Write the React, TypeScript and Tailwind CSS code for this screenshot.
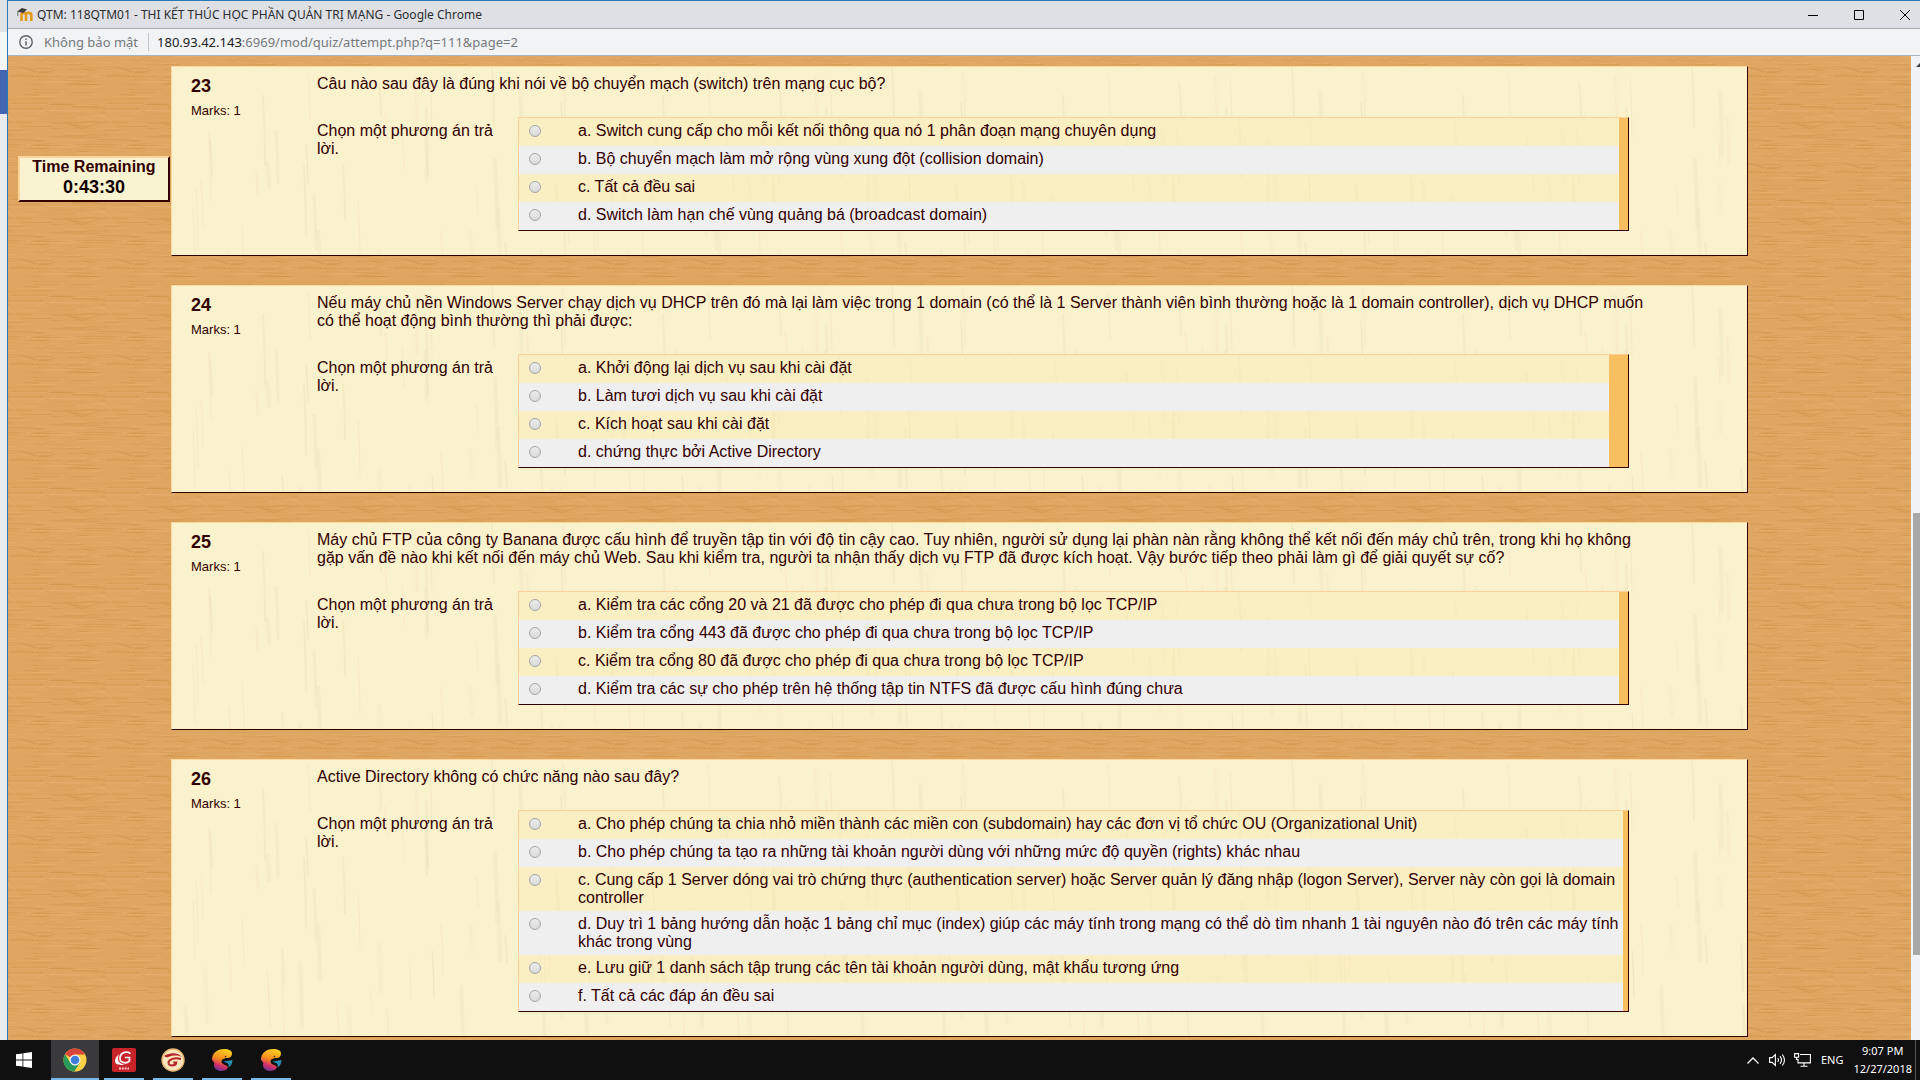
import React from "react";

type Question = {
  number: number;
  text: string;
  answers: string[];
  stripe: string;
};

const QUESTIONS: Question[] = [
  {
    number: 23,
    text: "Câu nào sau đây là đúng khi nói về bộ chuyển mạch (switch) trên mạng cục bộ?",
    answers: [
      "a. Switch cung cấp cho mỗi kết nối thông qua nó 1 phân đoạn mạng chuyên dụng",
      "b. Bộ chuyển mạch làm mở rộng vùng xung đột (collision domain)",
      "c. Tất cả đều sai",
      "d. Switch làm hạn chế vùng quảng bá (broadcast domain)",
    ],
    stripe: "w-[9px]",
  },
  {
    number: 24,
    text: "Nếu máy chủ nền Windows Server chạy dịch vụ DHCP trên đó mà lại làm việc trong 1 domain (có thể là 1 Server thành viên bình thường hoặc là 1 domain controller), dịch vụ DHCP muốn có thể hoạt động bình thường thì phải được:",
    answers: [
      "a. Khởi động lại dịch vụ sau khi cài đặt",
      "b. Làm tươi dịch vụ sau khi cài đặt",
      "c. Kích hoạt sau khi cài đặt",
      "d. chứng thực bởi Active Directory",
    ],
    stripe: "w-[19px]",
  },
  {
    number: 25,
    text: "Máy chủ FTP của công ty Banana được cấu hình để truyền tập tin với độ tin cậy cao. Tuy nhiên, người sử dụng lại phàn nàn rằng không thể kết nối đến máy chủ trên, trong khi họ không gặp vấn đề nào khi kết nối đến máy chủ Web. Sau khi kiểm tra, người ta nhận thấy dịch vụ FTP đã được kích hoạt. Vậy bước tiếp theo phải làm gì để giải quyết sự cố?",
    answers: [
      "a. Kiểm tra các cổng 20 và 21 đã được cho phép đi qua chưa trong bộ lọc TCP/IP",
      "b. Kiểm tra cổng 443 đã được cho phép đi qua chưa trong bộ lọc TCP/IP",
      "c. Kiểm tra cổng 80 đã được cho phép đi qua chưa trong bộ lọc TCP/IP",
      "d. Kiểm tra các sự cho phép trên hệ thống tập tin NTFS đã được cấu hình đúng chưa",
    ],
    stripe: "w-[9px]",
  },
  {
    number: 26,
    text: "Active Directory không có chức năng nào sau đây?",
    answers: [
      "a. Cho phép chúng ta chia nhỏ miền thành các miền con (subdomain) hay các đơn vị tổ chức OU (Organizational Unit)",
      "b. Cho phép chúng ta tạo ra những tài khoản người dùng với những mức độ quyền (rights) khác nhau",
      "c. Cung cấp 1 Server dóng vai trò chứng thực (authentication server) hoặc Server quản lý đăng nhập (logon Server), Server này còn gọi là domain controller",
      "d. Duy trì 1 bảng hướng dẫn hoặc 1 bảng chỉ mục (index) giúp các máy tính trong mạng có thể dò tìm nhanh 1 tài nguyên nào đó trên các máy tính khác trong vùng",
      "e. Lưu giữ 1 danh sách tập trung các tên tài khoản người dùng, mật khẩu tương ứng",
      "f. Tất cả các đáp án đều sai",
    ],
    stripe: "w-[5px]",
  },
];

/* Small deterministic generator so the grain is the same on every render. */
function generator(seed: number) {
  let s = seed;
  return () => {
    s = (s * 16807) % 2147483647;
    return s / 2147483647;
  };
}

function svgUrl(svg: string) {
  return `url("data:image/svg+xml,${encodeURIComponent(svg)}")`;
}

/* Horizontal oak grain, a 96px tile. */
function oakGrain() {
  const r = generator(77);
  let out = "";
  for (let i = 0; i < 170; i++) {
    const x = Math.floor(r() * 96);
    const y = Math.floor(r() * 96);
    const w = 8 + Math.floor(r() * 30);
    const c = r() > 0.45 ? "#cc8f40" : "#e9b473";
    const o = (0.12 + r() * 0.26).toFixed(2);
    out += `<rect x="${x}" y="${y}" width="${w}" height="1" fill="${c}" opacity="${o}"/>`;
    if (x + w > 96) out += `<rect x="${x - 96}" y="${y}" width="${w}" height="1" fill="${c}" opacity="${o}"/>`;
  }
  const knots =
    '<g fill="#c58a3c" opacity=".3">' +
    '<path d="M4 11q12-2 26 4l-4 2q-8-4-22-6zM30 15q14 1 26-3-12 5-26 5z"/>' +
    '<path d="M52 67q10-2 22 3l-6 2q-6-4-16-5zM70 71q12-1 22-4-10 5-22 6z"/>' +
    '<path d="M14 38h20l-6 2zM60 27h16l-5 2zM20 84h18l-6 2z"/></g>';
  return svgUrl(
    `<svg xmlns="http://www.w3.org/2000/svg" width="96" height="96"><rect width="96" height="96" fill="#dfa661"/>${out}${knots}</svg>`,
  );
}

/* Pale maple with faint vertical figure, used on the question cards. */
function mapleGrain() {
  const r = generator(4242);
  let out = "";
  for (let i = 0; i < 60; i++) {
    const x = Math.floor(r() * 396);
    const y = Math.floor(r() * 250);
    const h = 25 + Math.floor(r() * 50);
    const c = r() > 0.5 ? "#e8dcb0" : "#f8e0bc";
    const w = 1 + Math.floor(r() * 4);
    const o = (0.5 / w + 0.08).toFixed(2);
    out += `<path d="M${x} ${y}q2 ${Math.floor(h / 2)} 2 ${h}" stroke="${c}" stroke-width="${w}" opacity="${o}" fill="none"/>`;
  }
  return svgUrl(
    `<svg xmlns="http://www.w3.org/2000/svg" width="400" height="330"><rect width="400" height="330" fill="#f9f2cd"/>${out}</svg>`,
  );
}

const OAK = oakGrain();
const MAPLE = mapleGrain();

function MoodleIcon() {
  return (
    <svg viewBox="0 0 16 16" className="h-4 w-4" aria-hidden="true">
      <path d="M4.500 14V8c0-2.800 4.500-2.800 4.500 0v6M9 8c0-2.800 5.300-2.800 5.300 0v6" fill="none" stroke="#e59a1c" strokeWidth="2.600" />
      <path d="M0 4.500 5 1l5 1.500-3.600 3.400z" fill="#3d3d3d" />
      <path d="M1 4.500.8 9" stroke="#555" strokeWidth=".8" />
    </svg>
  );
}

function WindowsIcon() {
  return (
    <svg viewBox="0 0 16 16" className="h-4 w-4" fill="#fff" aria-hidden="true">
      <path d="M0 2.300 6.500 1.400V7.600H0zM7.300 1.300 16 0v7.600H7.300zM0 8.400h6.500v6.200L0 13.700zM7.300 8.400H16V16l-8.700-1.300z" />
    </svg>
  );
}

function ChromeIcon() {
  return (
    <svg viewBox="0 0 24 24" className="h-6 w-6" aria-hidden="true">
      <circle cx="12" cy="12" r="11.500" fill="#f9cf45" />
      <path d="M12 12 2.040 6.250A11.500 11.500 0 0 1 21.960 6.500H12z" fill="#d9453c" />
      <path d="M2.040 6.250A11.500 11.500 0 0 0 11.200 23.500L16.800 14.800 12 12 7.300 14.700z" fill="#279a5b" />
      <circle cx="12" cy="12" r="5.500" fill="#f2f4f5" />
      <circle cx="12" cy="12" r="4.300" fill="#3f7fdb" />
    </svg>
  );
}

function GCafeIcon() {
  return (
    <svg viewBox="0 0 24 24" className="h-6 w-6" aria-hidden="true">
      <rect width="24" height="24" rx="2" fill="#c9232a" />
      <path d="M18.500 5.600C15.500 2.800 9 4 8 9.500c-.8 5 6 7 9.500 3.300V9.500h-4.500" fill="none" stroke="#fff" strokeWidth="1.700" />
      <path d="M7.500 6C3 9 2 13.500 4 15.500c2.500 2 7 1.500 10 1-4 0-8-2-8-6 0-2 .5-3 1.500-4.500z" fill="#fff" />
      <path d="M7 20.500h10" stroke="#f3c3c3" strokeWidth="2" strokeDasharray="2 .8" />
    </svg>
  );
}

function GarenaIcon() {
  return (
    <svg viewBox="0 0 24 24" className="h-6 w-6" aria-hidden="true">
      <circle cx="12" cy="12" r="11.700" fill="#e6b56f" />
      <circle cx="12" cy="12" r="10.300" fill="#fae6bc" />
      <path d="M3 8c4-2.500 9-3.500 14-2l4.500 3c-5-1.700-9.500-2-13.500-.3C6 9.700 5 9.500 3 8z" fill="#b5262b" />
      <path d="M20 11c-5-1.500-9-.8-11.500 1.500-2.200 2.300-.8 5 2.500 5 2.500 0 4-1 4.300-3h-3" fill="none" stroke="#b5262b" strokeWidth="2" />
    </svg>
  );
}

function GamingIcon({ id }: { id: string }) {
  return (
    <svg viewBox="0 0 24 24" className="h-6 w-6" aria-hidden="true">
      <defs>
        <linearGradient id={id} x1=".7" y1="0" x2=".4" y2="1">
          <stop offset="0" stopColor="#fbd321" />
          <stop offset=".5" stopColor="#f58a1f" />
          <stop offset=".78" stopColor="#d52d6a" />
          <stop offset="1" stopColor="#6a3494" />
        </linearGradient>
      </defs>
      <path
        d="M2 12C2 5 7 1 14 1c5 0 8 1.500 8 4.500 0 3-2 4.500-4.500 4.500-2 0-3 .5-4.500 1-2 1-2 4 0 5 1.500 1 4 1.500 5 3-1 3-4 4-7 4-4 0-7-2.500-7-6 0-1 .2-1.500.5-2z"
        fill={`url(#${id})`}
      />
      <path d="M13.500 13.500 22.500 12c-.3 4-1.500 6-4 7.500.5-2 .2-3-.5-4z" fill="#2a8fb0" />
      <circle cx="15.500" cy="8.500" r=".8" fill="#40210f" />
    </svg>
  );
}

function TitleBar() {
  return (
    <header className="flex h-7 shrink-0 items-center border-b border-[#a9adb3] bg-[#dee0e5] pt-px pr-2.5 pl-[9px]">
      <MoodleIcon />
      <h1 className="ml-1 font-['Noto_Sans',sans-serif] text-xs leading-4 text-[#2c2d30]">
        QTM: 118QTM01 - THI KẾT THÚC HỌC PHẦN QUẢN TRỊ MẠNG - Google Chrome
      </h1>
      <div className="ml-auto flex items-center gap-9">
        <button type="button" aria-label="Minimize" className="h-2.5 w-2.5">
          <svg viewBox="0 0 10 10" className="h-2.5 w-2.5"><path d="M0 5.500h10" stroke="#000" /></svg>
        </button>
        <button type="button" aria-label="Maximize" className="h-2.5 w-2.5">
          <svg viewBox="0 0 10 10" className="h-2.5 w-2.5"><path d="M.5.5h9v9h-9z" stroke="#000" fill="none" /></svg>
        </button>
        <button type="button" aria-label="Close" className="h-2.5 w-2.5">
          <svg viewBox="0 0 10 10" className="h-2.5 w-2.5"><path d="M0 0l10 10M10 0 0 10" stroke="#000" /></svg>
        </button>
      </div>
    </header>
  );
}

function AddressBar() {
  return (
    <div className="flex h-[27px] shrink-0 items-center border-b border-[#a9b3bb] bg-[#f1f3f5] pl-[11px] font-['Noto_Sans',sans-serif] text-[13px] leading-5 text-[#77797d]">
      <svg viewBox="0 0 14 14" className="h-3.5 w-3.5" aria-hidden="true">
        <circle cx="7" cy="7" r="6.200" fill="none" stroke="#5f6368" strokeWidth="1.400" />
        <path d="M7 6.200v4.300M7 3.400v1.500" stroke="#5f6368" strokeWidth="1.500" />
      </svg>
      <span className="ml-[11px]">Không bảo mật</span>
      <span className="mr-2 ml-2.5 h-[18px] w-px bg-[#c3c5c9]" />
      <span>
        <span className="text-[#202124]">180.93.42.143</span>:6969/mod/quiz/attempt.php?q=111&amp;page=2
      </span>
    </div>
  );
}

function QuestionCard({ question }: { question: Question }) {
  const promptId = `prompt-${question.number}`;
  return (
    <article
      className="flex border border-t-[#ffd8a0] border-r-[#330000] border-b-[#330000] border-l-[#ffd8a0] pt-2 pr-[97px] pb-6 pl-[19px]"
      style={{ backgroundImage: MAPLE }}
    >
      <div className="w-[126px] shrink-0">
        <h2 className="text-lg leading-[22px] font-bold">{question.number}</h2>
        <p className="mt-1.5 text-[13px] leading-4">Marks: 1</p>
      </div>
      <div className="min-w-0 flex-1">
        <p className="text-base leading-[18px]">{question.text}</p>
        <div role="radiogroup" aria-labelledby={promptId} className="mt-6 mr-[21px] flex">
          <p id={promptId} className="w-[201px] shrink-0 pt-[5px] pr-5 text-base leading-[18px]">
            Chọn một phương án trả lời.
          </p>
          <div className="flex min-w-0 flex-1 border border-t-[#fdcf9c] border-r-[#330000] border-b-[#330000] border-l-[#fdcf9c] bg-[#f7bf60]">
            <div className="min-w-0 flex-1" style={{ backgroundImage: MAPLE }}>
              {question.answers.map((answer) => (
                <label
                  key={answer}
                  className="flex min-h-7 items-start bg-[#fbecb4]/40 pt-1 pb-1 text-base leading-[18px] even:bg-[#f0eff0]"
                >
                  <input
                    type="radio"
                    name={`q${question.number}`}
                    className="mt-[3px] ml-2.5 h-3 w-3 shrink-0 appearance-none rounded-full border border-[#a5a5a5] bg-linear-to-b from-[#ececec] to-[#dadada] checked:bg-[#555555]"
                  />
                  <span className="ml-[37px] min-w-0 flex-1">{answer}</span>
                </label>
              ))}
            </div>
            <div className={`${question.stripe} shrink-0`} />
          </div>
        </div>
      </div>
    </article>
  );
}

function ScrollBar() {
  return (
    <div className="relative flex w-[9px] shrink-0 flex-col bg-[#f1f2f5] pl-0.5" aria-hidden="true">
      <div className="flex-[457]" />
      <div className="flex-[442] bg-[#a8a8a8]" />
      <div className="flex-[85]" />
      <svg viewBox="0 0 4 4" className="absolute top-[7px] right-0 h-1 w-1"><path d="M0 4 4 0v4z" fill="#404040" /></svg>
    </div>
  );
}

function TaskButton({ label, active, children }: { label: string; active?: boolean; children: React.ReactNode }) {
  return (
    <button
      type="button"
      aria-label={label}
      className={
        active
          ? "flex h-10 w-12 flex-col items-center bg-[#3a393b] pt-2"
          : "flex h-10 w-12 flex-col items-center pt-2"
      }
    >
      {children}
      <span className={active ? "mt-1.5 h-0.5 w-12 bg-[#76b9ed]" : "mt-1.5 h-0.5 w-10 bg-[#76b9ed]"} />
    </button>
  );
}

function Taskbar() {
  return (
    <footer className="flex h-10 shrink-0 items-center bg-[#101010] font-['Noto_Sans',sans-serif] text-[11px] text-white">
      <button type="button" aria-label="Start" className="flex h-10 w-[51px] items-center pl-4">
        <WindowsIcon />
      </button>
      <nav className="flex gap-px" aria-label="Taskbar">
        <TaskButton label="Google Chrome" active><ChromeIcon /></TaskButton>
        <TaskButton label="gCafe"><GCafeIcon /></TaskButton>
        <TaskButton label="Garena"><GarenaIcon /></TaskButton>
        <TaskButton label="Gaming client"><GamingIcon id="gaming-a" /></TaskButton>
        <TaskButton label="Gaming client, second window"><GamingIcon id="gaming-b" /></TaskButton>
      </nav>
      <div className="ml-auto flex h-10 items-center">
        <svg viewBox="0 0 12 7" className="mr-2.5 h-[7px] w-3" fill="none" stroke="#fff" strokeWidth="1.300" aria-hidden="true">
          <path d="M.5 6.500 6 1l5.500 5.500" />
        </svg>
        <svg viewBox="0 0 17 14" className="mr-2 h-3.5 w-[17px]" fill="none" stroke="#fff" strokeWidth="1.100" aria-hidden="true">
          <path d="M.6 4.600h2.500L6.400 1.500v11L3.100 9.400H.6zM8.700 5q1.500 2 0 4M11 3.200q3 3.800 0 7.600M13.300 1.500q4.400 5.500 0 11" />
        </svg>
        <svg viewBox="0 0 17 14" className="mr-2.5 h-3.5 w-[17px]" fill="none" stroke="#fff" strokeWidth="1.100" aria-hidden="true">
          <path d="M6 1.500h10.400v8.400H4V6M10 10v3M6.500 13.200h7M.6.6h4v3.600h-4zM2.600 4.200v2.300H4" />
        </svg>
        <span className="mr-2.5 leading-4">ENG</span>
        <div className="mr-[3px] text-center leading-[18px]">
          <div>9:07 PM</div>
          <div>12/27/2018</div>
        </div>
        <div className="mr-1 h-10 w-px bg-[#555555]" />
      </div>
    </footer>
  );
}

export default function App() {
  return (
    <div className="flex h-screen flex-col overflow-hidden">
      <div className="flex min-h-0 flex-1">
        <div className="flex w-[7px] shrink-0 flex-col bg-[#e9ebee]" aria-hidden="true">
          <div className="h-8 bg-[#dfe2e4]" />
          <div className="h-[38px] bg-[#f5f6f7]" />
          <div className="h-11 bg-[#4267b2]" />
        </div>
        <div className="flex min-w-0 flex-1 flex-col border-t border-l border-[#2b7ab8]">
          <TitleBar />
          <AddressBar />
          <div className="flex min-h-0 flex-1">
            <main
              className="relative min-w-0 flex-1 overflow-hidden font-['Liberation_Sans',Arial,sans-serif] text-[#330000]"
              style={{ backgroundImage: OAK }}
            >
              <form className="flex flex-col gap-[29px] px-[163px] pt-2.5">
                {QUESTIONS.map((q) => (
                  <QuestionCard key={q.number} question={q} />
                ))}
              </form>
              <aside className="absolute top-[100px] left-2.5 w-[152px] border-2 border-t-[#fbd59b] border-r-[#330000] border-b-[#330000] border-l-[#fbd59b] bg-[#faf3d2] text-center font-bold">
                <div className="text-base leading-[18px]">Time Remaining</div>
                <div className="pb-0.5 text-lg leading-[22px] text-[#110000]">0:43:30</div>
              </aside>
            </main>
            <ScrollBar />
          </div>
        </div>
      </div>
      <Taskbar />
    </div>
  );
}
